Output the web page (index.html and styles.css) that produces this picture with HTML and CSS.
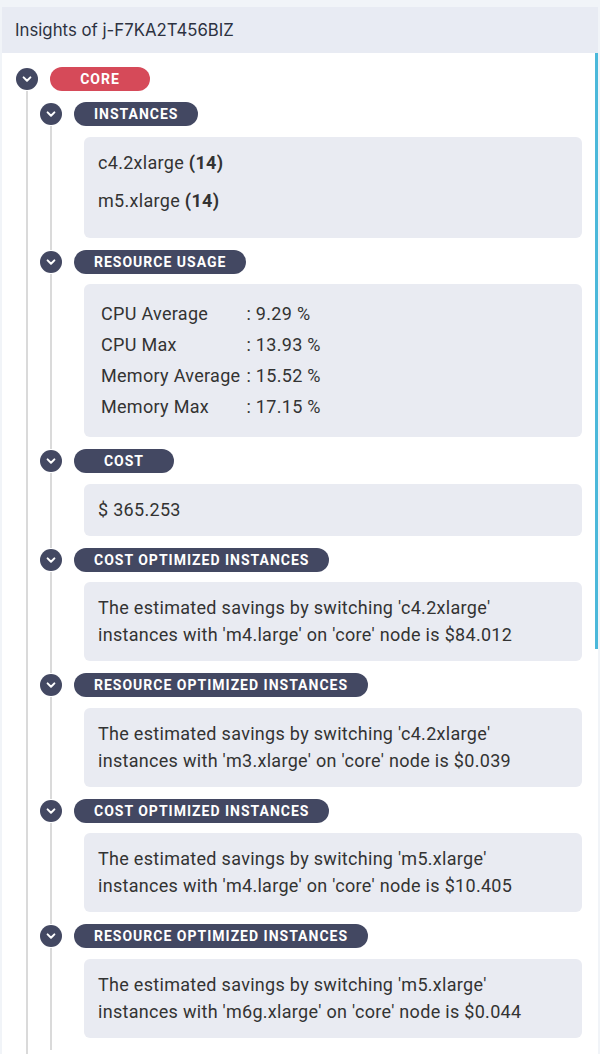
FILE: index.html
```html
<!doctype html>
<html lang="en">
<head>
  <meta charset="utf-8">
  <title>Insights of j-F7KA2T456BIZ</title>
  <link rel="stylesheet" href="styles.css">
</head>
<body>
  <div class="panel">
    <div class="panel-head">Insights of j-F7KA2T456BIZ</div>
    <div class="panel-body">
      <div class="node">
        <div class="node-row">
          <span class="toggle"><svg width="10" height="10" viewBox="0 0 10 10"><path d="M1.6 3.4 L5 6.8 L8.4 3.4"/></svg></span>
          <span class="tag tag-red">CORE</span>
        </div>
        <div class="children">

          <div class="node">
            <div class="node-row">
              <span class="toggle"><svg width="10" height="10" viewBox="0 0 10 10"><path d="M1.6 3.4 L5 6.8 L8.4 3.4"/></svg></span>
              <span class="tag">INSTANCES</span>
            </div>
            <div class="leaf">
              <div class="box box-list">
                <p>c4.2xlarge <b>(14)</b></p>
                <p>m5.xlarge <b>(14)</b></p>
              </div>
            </div>
          </div>

          <div class="node">
            <div class="node-row">
              <span class="toggle"><svg width="10" height="10" viewBox="0 0 10 10"><path d="M1.6 3.4 L5 6.8 L8.4 3.4"/></svg></span>
              <span class="tag">RESOURCE USAGE</span>
            </div>
            <div class="leaf">
              <div class="box">
                <table class="usage">
                  <tr><td>CPU Average</td><td>: 9.29 %</td></tr>
                  <tr><td>CPU Max</td><td>: 13.93 %</td></tr>
                  <tr><td>Memory Average</td><td>: 15.52 %</td></tr>
                  <tr><td>Memory Max</td><td>: 17.15 %</td></tr>
                </table>
              </div>
            </div>
          </div>

          <div class="node">
            <div class="node-row">
              <span class="toggle"><svg width="10" height="10" viewBox="0 0 10 10"><path d="M1.6 3.4 L5 6.8 L8.4 3.4"/></svg></span>
              <span class="tag">COST</span>
            </div>
            <div class="leaf">
              <div class="box"><p>$ 365.253</p></div>
            </div>
          </div>

          <div class="node">
            <div class="node-row">
              <span class="toggle"><svg width="10" height="10" viewBox="0 0 10 10"><path d="M1.6 3.4 L5 6.8 L8.4 3.4"/></svg></span>
              <span class="tag">COST OPTIMIZED INSTANCES</span>
            </div>
            <div class="leaf">
              <div class="box"><p>The estimated savings by switching 'c4.2xlarge' instances with 'm4.large' on 'core' node is $84.012</p></div>
            </div>
          </div>

          <div class="node">
            <div class="node-row">
              <span class="toggle"><svg width="10" height="10" viewBox="0 0 10 10"><path d="M1.6 3.4 L5 6.8 L8.4 3.4"/></svg></span>
              <span class="tag">RESOURCE OPTIMIZED INSTANCES</span>
            </div>
            <div class="leaf">
              <div class="box"><p>The estimated savings by switching 'c4.2xlarge' instances with 'm3.xlarge' on 'core' node is $0.039</p></div>
            </div>
          </div>

          <div class="node">
            <div class="node-row">
              <span class="toggle"><svg width="10" height="10" viewBox="0 0 10 10"><path d="M1.6 3.4 L5 6.8 L8.4 3.4"/></svg></span>
              <span class="tag">COST OPTIMIZED INSTANCES</span>
            </div>
            <div class="leaf">
              <div class="box"><p>The estimated savings by switching 'm5.xlarge' instances with 'm4.large' on 'core' node is $10.405</p></div>
            </div>
          </div>

          <div class="node">
            <div class="node-row">
              <span class="toggle"><svg width="10" height="10" viewBox="0 0 10 10"><path d="M1.6 3.4 L5 6.8 L8.4 3.4"/></svg></span>
              <span class="tag">RESOURCE OPTIMIZED INSTANCES</span>
            </div>
            <div class="leaf">
              <div class="box"><p>The estimated savings by switching 'm5.xlarge' instances with 'm6g.xlarge' on 'core' node is $0.044</p></div>
            </div>
          </div>

        </div>
      </div>
      <div class="scrollbar"></div>
    </div>
  </div>
</body>
</html>
```

FILE: styles.css
```css
html{
  background-color: #f1f4f8;
}
body{
  margin: 0;
  padding: 0;
  font-family: 'Roboto', sans-serif;
  color: #333333;
}
.panel{
  margin: 7px 2px 0 2px;
  background-color: #ffffff;
}
.panel-head{
  height: 46px;
  display: flex;
  align-items: center;
  padding-left: 13px;
  background-color: #e8ebf3;
  color: #2d3241;
  font-family: 'Inter', sans-serif;
  font-size: 16.8px;
}
.panel-body{
  position: relative;
  height: 1001px;
  overflow: hidden;
  padding: 14px 16px 0 14px;
  box-sizing: border-box;
}
.scrollbar{
  position: absolute;
  top: 0;
  right: 0;
  width: 3px;
  height: 596px;
  background-color: #4bb8da;
}
.node-row{
  display: flex;
  align-items: center;
  gap: 12px;
  height: 24px;
}
.toggle{
  width: 22px;
  height: 22px;
  border-radius: 50%;
  background-color: #434862;
  display: flex;
  align-items: center;
  justify-content: center;
  flex-shrink: 0;
}
.toggle path{
  fill: none;
  stroke: #ffffff;
  stroke-width: 2;
  stroke-linecap: round;
  stroke-linejoin: round;
}
.tag{
  min-width: 100px;
  height: 24px;
  box-sizing: border-box;
  padding: 0 20px;
  border-radius: 12px;
  background-color: #434862;
  color: #ffffff;
  font-family: 'Roboto', sans-serif;
  font-weight: 700;
  font-size: 14px;
  letter-spacing: 1px;
  line-height: 24px;
  text-align: center;
}
.tag-red{
  background-color: #d64a59;
}
.children{
  margin-left: 10px;
  border-left: 2px solid #dadada;
  padding-left: 12px;
  padding-top: 11px;
  min-height: 1000px;
}
.leaf{
  margin-left: 10px;
  border-left: 2px solid #dadada;
  padding: 10.5px 0 12px 32px;
}
.box{
  background-color: #e9ebf2;
  border-radius: 6px;
  padding: 12px 14px 13px 14px;
  font-size: 18px;
  line-height: 27px;
  letter-spacing: 0.3px;
  color: #333333;
}
.box p{
  margin: 0;
  max-width: 440px;
}
.box-list p{
  margin-bottom: 11px;
}
.usage{
  border-collapse: collapse;
  margin: 2px 0;
}
.usage td{
  padding: 2px 3px;
  white-space: nowrap;
}
```
